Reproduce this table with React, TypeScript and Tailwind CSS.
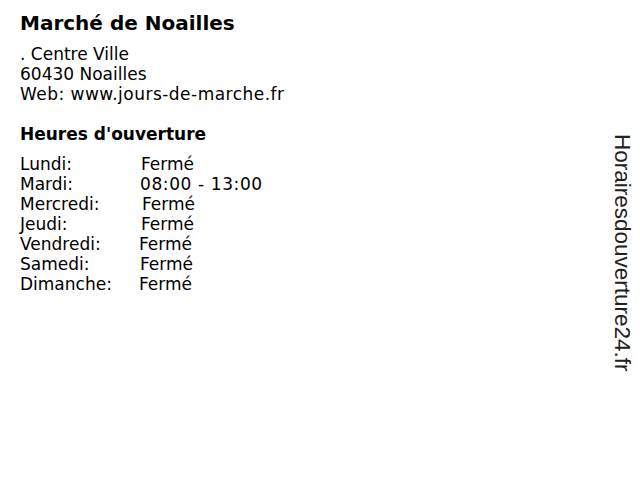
const hours: { day: string; time: string; shift: string }[] = [
  { day: "Lundi:", time: "Fermé", shift: "pl-0" },
  { day: "Mardi:", time: "08:00 - 13:00", shift: "-ml-px tracking-[0.6px]" },
  { day: "Mercredi:", time: "Fermé", shift: "pl-px" },
  { day: "Jeudi:", time: "Fermé", shift: "pl-0" },
  { day: "Vendredi:", time: "Fermé", shift: "-ml-0.5" },
  { day: "Samedi:", time: "Fermé", shift: "-ml-px" },
  { day: "Dimanche:", time: "Fermé", shift: "-ml-0.5" },
];

export default function App() {
  return (
    <div className="w-[640px] h-[480px] bg-white text-black flex overflow-hidden font-['DejaVu_Sans',sans-serif]">
      <div className="flex-1 pl-5 pt-[11px]">
        <h1 className="text-[20px] leading-[24px] font-bold">Marché de Noailles</h1>

        <div className="mt-[9px] text-[17px] leading-[20px]">
          <div>. Centre Ville</div>
          <div>60430 Noailles</div>
          <div className="tracking-[0.48px]">Web: www.jours-de-marche.fr</div>
        </div>

        <h2 className="mt-5 text-[17px] leading-[20px] font-bold">Heures d'ouverture</h2>

        <div className="mt-[10px] text-[17px] leading-[20px]">
          {hours.map((h) => (
            <div key={h.day} className="flex">
              <div className="w-[121px] shrink-0">{h.day}</div>
              <div className={h.shift}>{h.time}</div>
            </div>
          ))}
        </div>
      </div>

      {/* Site watermark */}
      <div className="w-[31px] shrink-0 pt-[134px] flex justify-start">
        <div className="[writing-mode:vertical-rl] text-[22.5px] leading-[26px] text-[#222] font-['Liberation_Sans',Arial,sans-serif]">
          Horairesdouverture24.fr
        </div>
      </div>
    </div>
  );
}
